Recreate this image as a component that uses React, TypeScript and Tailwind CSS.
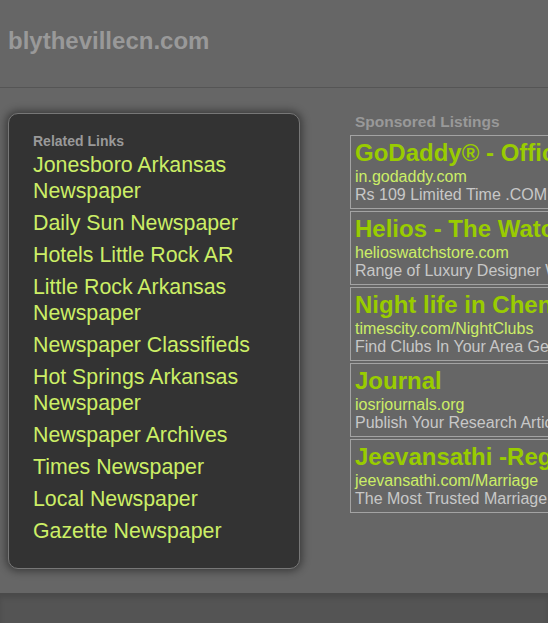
const relatedLinks: string[] = [
    "Jonesboro Arkansas Newspaper",
    "Daily Sun Newspaper",
    "Hotels Little Rock AR",
    "Little Rock Arkansas Newspaper",
    "Newspaper Classifieds",
    "Hot Springs Arkansas Newspaper",
    "Newspaper Archives",
    "Times Newspaper",
    "Local Newspaper",
    "Gazette Newspaper",
];

interface Ad {
    title: string;
    url: string;
    desc: string;
}

const ads: Ad[] = [
    { title: "GoDaddy® - Official Site", url: "in.godaddy.com", desc: "Rs 109 Limited Time .COM Offer" },
    { title: "Helios - The Watch Store", url: "helioswatchstore.com", desc: "Range of Luxury Designer Watches" },
    { title: "Night life in Chennai", url: "timescity.com/NightClubs", desc: "Find Clubs In Your Area Get Details" },
    { title: "Journal", url: "iosrjournals.org", desc: "Publish Your Research Articles" },
    { title: "Jeevansathi -Register Free", url: "jeevansathi.com/Marriage", desc: "The Most Trusted Marriage Portal" },
];

function AdBox({ ad }: { ad: Ad }) {
    return (
        <div className="w-[420px] h-[74px] border border-[#a3a3a3] pl-[4px] pt-[2px] pb-[4px] whitespace-nowrap">
            <div className="text-[24px] leading-[30px] font-bold text-[#99cc00]">{ad.title}</div>
            <div className="text-[16px] leading-[18px] text-[#ccee66]">{ad.url}</div>
            <div className="text-[16px] leading-[18px] text-[#c8c8c8]">{ad.desc}</div>
        </div>
    );
}

export default function App() {
    return (
        <div className="w-full h-[623px] overflow-hidden bg-[#666666] flex flex-col font-['Liberation_Sans',Arial,sans-serif]">
            <div className="h-[88px] shrink-0 border-b border-[#555555] pl-2 pt-[27px]">
                <span className="text-[24px] leading-[28px] font-bold text-[#999999]">blythevillecn.com</span>
            </div>

            <div className="h-[505px] shrink-0 flex pt-[25px] pl-2">
                <div className="w-[292px] h-[456px] shrink-0 bg-[#333333] border border-[#777777] rounded-[10px] shadow-[0_0_8px_2px_rgba(0,0,0,0.45)] pt-[19px] pl-[24px] pr-[20px]">
                    <div className="text-[14px] leading-[16px] font-bold text-[#999999] mb-[3px]">Related Links</div>
                    {relatedLinks.map((l, i) => (
                        <div key={i} className="text-[21.33px] leading-[26px] text-[#ccee66] mb-[6px]">
                            {l}
                        </div>
                    ))}
                </div>

                <div className="ml-[50px] shrink-0">
                    <div className="pl-[5px] text-[15.5px] leading-[18px] font-bold text-[#999999] mb-[4px]">Sponsored Listings</div>
                    <div className="flex flex-col gap-[2px]">
                        {ads.map((a, i) => (
                            <AdBox key={i} ad={a} />
                        ))}
                    </div>
                </div>
            </div>

            <div className="flex-1 bg-[#545454] shadow-[inset_0_5px_5px_rgba(0,0,0,0.12)]" />
        </div>
    );
}
